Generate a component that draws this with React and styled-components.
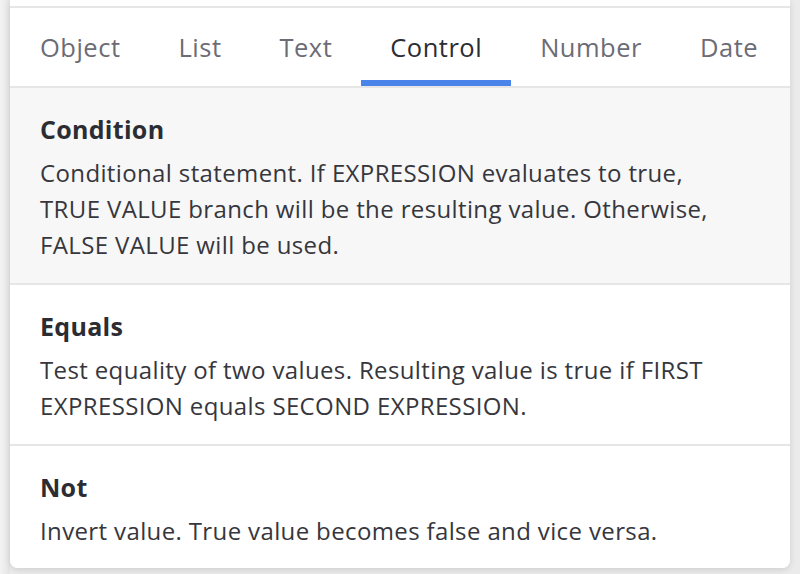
import styled, { createGlobalStyle } from "styled-components";

const tabs = ["Object", "List", "Text", "Control", "Number", "Date"];

const items = [
  {
    title: "Condition",
    text: "Conditional statement. If EXPRESSION evaluates to true, TRUE VALUE branch will be the resulting value. Otherwise, FALSE VALUE will be used.",
    hover: true,
  },
  {
    title: "Equals",
    text: "Test equality of two values. Resulting value is true if FIRST EXPRESSION equals SECOND EXPRESSION.",
  },
  {
    title: "Not",
    text: "Invert value. True value becomes false and vice versa.",
  },
];

export default function App() {
  return (
    <>
      <GlobalStyle />
      <Page>
        <Popover>
          <TopStrip />
          <TabBar>
            {tabs.map((t) => (
              <Tab key={t} $active={t === "Control"}>
                {t}
              </Tab>
            ))}
          </TabBar>
          <List>
            {items.map((item) => (
              <Item key={item.title} $hover={item.hover}>
                <ItemTitle>{item.title}</ItemTitle>
                <ItemText>{item.text}</ItemText>
              </Item>
            ))}
          </List>
        </Popover>
        <BehindText>Workflows</BehindText>
      </Page>
    </>
  );
}

const GlobalStyle = createGlobalStyle`
  html, body {
    margin: 0;
    padding: 0;
    height: 100%;
    overflow: hidden;
    background: #ebebeb;
  }
  body {
    font-family: "Open Sans", "Noto Sans", sans-serif;
  }
`;

const Page = styled.div`
  height: 574px;
  overflow: hidden;
  background: linear-gradient(to right, #f3f3f3 0, #e4e4e4 10px, #ebebeb 10px);
  padding: 0 10px;
  box-sizing: border-box;
`;

const Popover = styled.div`
  background: #ffffff;
  border-radius: 0 0 8px 8px;
  box-shadow: 0 2px 6px rgba(0, 0, 0, 0.12);
  overflow: hidden;
`;

const TopStrip = styled.div`
  height: 6px;
  border-bottom: 2px solid #e6e6e6;
`;

const TabBar = styled.div`
  display: flex;
  height: 78px;
  border-bottom: 2px solid #e6e6e6;
  padding-left: 1px;
`;

const Tab = styled.div`
  display: flex;
  align-items: center;
  padding: 0 29px;
  font-size: 25.5px;
  letter-spacing: 0.5px;
  white-space: nowrap;
  color: ${(p) => (p.$active ? "#2c2c33" : "#6c6c76")};
  box-shadow: ${(p) => (p.$active ? "inset 0 -6px 0 #4a84ea" : "none")};
`;

const List = styled.div`
  display: flex;
  flex-direction: column;
`;

const Item = styled.div`
  padding: 23px 50px 20px 30px;
  background: ${(p) => (p.$hover ? "#f7f7f7" : "#ffffff")};
  & + & {
    border-top: 2px solid #e6e6e6;
  }
  &:last-child {
    padding-bottom: 19px;
  }
`;

const ItemTitle = styled.div`
  font-size: 25px;
  font-weight: 700;
  letter-spacing: 0.3px;
  line-height: 36px;
  color: #2c2c33;
  margin-bottom: 8px;
`;

const ItemText = styled.div`
  font-size: 24px;
  letter-spacing: 0.37px;
  line-height: 36px;
  color: #36363d;
`;

const BehindText = styled.div`
  padding: 2px 30px;
  font-size: 24px;
  color: #555;
`;
